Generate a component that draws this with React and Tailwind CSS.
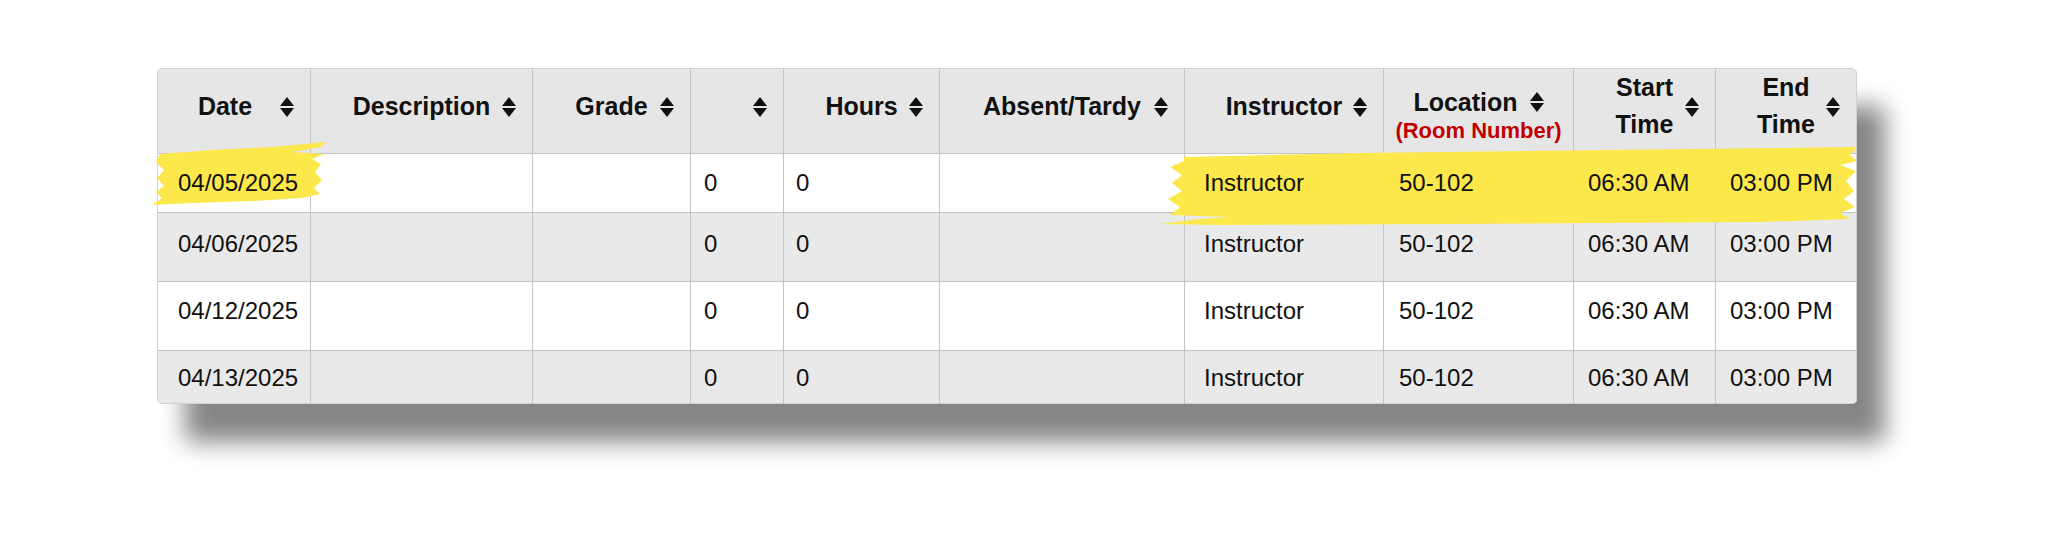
import React from 'react';

const cols = "grid grid-cols-[153px_222px_158px_93px_156px_245px_199px_190px_142px_140px]";
const line = "border-[#c4c4c4]";

const SortIcon = ({ className = "" }) => (
  <svg width="14" height="20" viewBox="0 0 14 20" className={className}>
    <polygon points="0,9 7,0 14,9" fill="#111" />
    <polygon points="0,11 14,11 7,20" fill="#111" />
  </svg>
);

const HeaderCell = ({ children, last, className = "" }) => (
  <div className={`relative flex items-center justify-center pb-[13px] ${last ? "" : `border-r ${line}`} ${className}`}>
    {children}
    <SortIcon className="absolute right-[16px] top-[28px]" />
  </div>
);

const rows = [
  { date: "04/05/2025", bg: "bg-white", h: "h-[59px]", pt: "pt-[15px]" },
  { date: "04/06/2025", bg: "bg-[#e9e9e9]", h: "h-[69px]", pt: "pt-[17px]" },
  { date: "04/12/2025", bg: "bg-white", h: "h-[69px]", pt: "pt-[15px]" },
  { date: "04/13/2025", bg: "bg-[#e9e9e9]", h: "h-[52px]", pt: "pt-[13px]", last: true },
];

const Cell = ({ children, pl = "", pt, last }) => (
  <div className={`${pt} ${pl} ${last ? "" : `border-r ${line}`}`}>
    {children !== undefined && <span className="relative z-[2]">{children}</span>}
  </div>
);

export default function App() {
  return (
    <div className="min-h-[550px] bg-white pt-[68px] pl-[157px] font-['Liberation_Sans',Arial,sans-serif] text-[#111]">
      <div className="relative w-[1700px] rounded-[5px] bg-white shadow-[28px_38px_24px_rgba(0,0,0,0.48)]">
        <div className="overflow-hidden rounded-[5px] border border-[#d2d2d2]">
          {/* header */}
          <div className={`${cols} h-[85px] bg-[#e6e6e6] border-b ${line} text-[25px] font-bold leading-[30px]`}>
            <HeaderCell><span className="pr-[18px]">Date</span></HeaderCell>
            <HeaderCell>Description</HeaderCell>
            <HeaderCell>Grade</HeaderCell>
            <HeaderCell />
            <HeaderCell>Hours</HeaderCell>
            <HeaderCell>Absent/Tardy</HeaderCell>
            <HeaderCell>Instructor</HeaderCell>
            <div className={`flex flex-col items-center pt-[18px] border-r ${line}`}>
              <div className="flex items-center gap-[12px]">
                Location <SortIcon />
              </div>
              <div className="text-[22px] leading-[28px] text-[#c00000]">(Room Number)</div>
            </div>
            <HeaderCell>
              <div className="text-center leading-[37px]">Start<br />Time</div>
            </HeaderCell>
            <HeaderCell last>
              <div className="text-center leading-[37px]">End<br />Time</div>
            </HeaderCell>
          </div>

          {/* body */}
          {rows.map((r) => (
            <div key={r.date} className={`${cols} ${r.h} ${r.bg} ${r.last ? "" : `border-b ${line}`} text-[24px] leading-[28px]`}>
              <Cell pt={r.pt} pl="pl-[20px]">{r.date}</Cell>
              <Cell pt={r.pt} />
              <Cell pt={r.pt} />
              <Cell pt={r.pt} pl="pl-[13px]">0</Cell>
              <Cell pt={r.pt} pl="pl-[12px]">0</Cell>
              <Cell pt={r.pt} />
              <Cell pt={r.pt} pl="pl-[19px]">Instructor</Cell>
              <Cell pt={r.pt} pl="pl-[15px]">50-102</Cell>
              <Cell pt={r.pt} pl="pl-[14px]">06:30 AM</Cell>
              <Cell pt={r.pt} pl="pl-[14px]" last>03:00 PM</Cell>
            </div>
          ))}
        </div>

        {/* marker highlights */}
        <svg className="absolute left-[-5px] top-[74px] z-[1]" width="176" height="64" viewBox="0 0 176 64">
          <path
            d="M8 12 L60 8 L120 5 L175 0 L168 5 L140 10 L172 12 L160 17 L169 22 L163 30 L170 38 L162 46 L168 52 L150 56 L100 59 L40 61 L0 63 L10 56 L4 50 L12 44 L5 36 L12 28 L4 20 Z"
            fill="#fde84b"
          />
        </svg>
        <svg className="absolute left-[1003px] top-[79px] z-[1]" width="700" height="80" viewBox="0 0 700 80">
          <path
            d="M24 10 L200 6 L450 3 L697 0 L690 8 L697 14 L680 18 L696 24 L686 34 L694 44 L684 52 L695 60 L680 66 L690 72 L600 75 L300 77 L60 78 L0 77 L40 72 L70 70 L10 68 L20 60 L8 52 L22 44 L12 36 L22 28 L10 20 L24 14 Z"
            fill="#fde84b"
          />
        </svg>
      </div>
    </div>
  );
}
